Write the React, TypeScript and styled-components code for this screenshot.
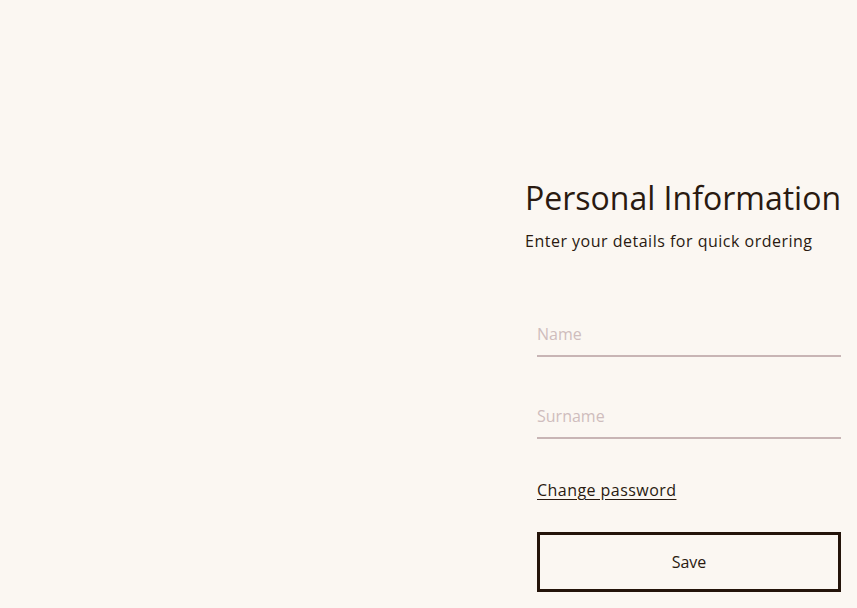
import React from "react";
import styled, { createGlobalStyle } from "styled-components";

const Global = createGlobalStyle`
  html, body { margin: 0; padding: 0; background: #fbf7f2; }
  body { font-family: "Open Sans", "Noto Sans", sans-serif; color: #2a1a10; }
`;

const Page = styled.div`
  min-height: 608px;
  display: flex;
  justify-content: flex-end;
  padding: 176px 16px 0 0;
  box-sizing: border-box;
`;

const Panel = styled.section`
  width: 316px;
  display: flex;
  flex-direction: column;
`;

const Title = styled.h1`
  margin: 0;
  font-size: 32px;
  font-weight: 400;
  line-height: 44px;
  color: #2a1a10;
  white-space: nowrap;
`;

const Subtitle = styled.p`
  margin: 10px 0 0;
  font-size: 16px;
  line-height: 22px;
  letter-spacing: 0.5px;
  color: #2a1a10;
`;

const Form = styled.form`
  display: flex;
  flex-direction: column;
  padding-left: 12px;
  margin-top: 63px;
`;

const Field = styled.input<{ $gap?: number }>`
  display: block;
  width: 100%;
  box-sizing: border-box;
  border: none;
  border-bottom: 2px solid #c8b5b5;
  background: transparent;
  font-family: inherit;
  font-size: 16px;
  color: #2a1a10;
  padding: 8px 0 10px;
  margin-top: ${(p) => p.$gap ?? 0}px;
  outline: none;
  &::placeholder { color: #cfbdbd; }
`;

const Link = styled.a`
  margin-top: 40px;
  font-size: 16px;
  line-height: 22px;
  letter-spacing: 0.45px;
  color: #2a1a10;
  text-decoration: underline;
  text-underline-offset: 3px;
  align-self: flex-start;
  cursor: pointer;
`;

const Button = styled.button`
  margin-top: 31px;
  height: 60px;
  width: 100%;
  background: transparent;
  border: 3px solid #24140a;
  font-family: inherit;
  font-size: 16px;
  color: #2a1a10;
  cursor: pointer;
`;

export default function App() {
  return (
    <>
      <Global />
      <Page>
        <Panel>
          <Title>Personal Information</Title>
          <Subtitle>Enter your details for quick ordering</Subtitle>
          <Form onSubmit={(e) => e.preventDefault()}>
            <Field placeholder="Name" />
            <Field placeholder="Surname" $gap={40} />
            <Link>Change password</Link>
            <Button type="submit">Save</Button>
          </Form>
        </Panel>
      </Page>
    </>
  );
}
